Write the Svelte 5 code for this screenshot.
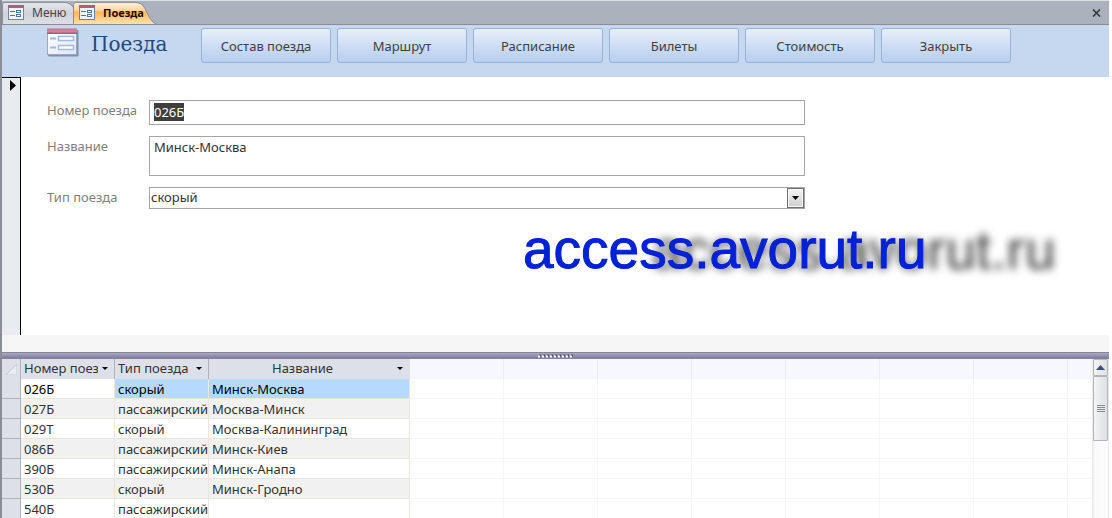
<script lang="ts">
  import { onMount } from 'svelte'

  const tabs = [
    { title: 'Меню', active: false },
    { title: 'Поезда', active: true }
  ]

  const actions = ['Состав поезда', 'Маршрут', 'Расписание', 'Билеты', 'Стоимость', 'Закрыть']

  const trains = [
    { number: '026Б', type: 'скорый', name: 'Минск-Москва' },
    { number: '027Б', type: 'пассажирский', name: 'Москва-Минск' },
    { number: '029Т', type: 'скорый', name: 'Москва-Калининград' },
    { number: '086Б', type: 'пассажирский', name: 'Минск-Киев' },
    { number: '390Б', type: 'пассажирский', name: 'Минск-Анапа' },
    { number: '530Б', type: 'скорый', name: 'Минск-Гродно' },
    { number: '540Б', type: 'пассажирский', name: '' }
  ]

  const columns = ['Номер поезда', 'Тип поезда', 'Название']
  const spare = Array.from({ length: 8 }, (_, i) => i)

  let current = $state(0)
  let number = $state(trains[0].number)
  let name = $state(trains[0].name)
  let type = $state(trains[0].type)
  let numberInput: HTMLInputElement

  function pick(i: number) {
    current = i
    number = trains[i].number
    name = trains[i].name
    type = trains[i].type
  }

  onMount(() => {
    numberInput.focus()
    numberInput.select()
  })
</script>

{#snippet formIcon(cls: string)}
  <svg class={cls} viewBox="0 0 32 29" aria-hidden="true">
    <defs>
      <linearGradient id="icon-head" x2="0" y2="1">
        <stop offset="0" stop-color="#c96a8a" />
        <stop offset="0.5" stop-color="#d58aa4" />
        <stop offset="1" stop-color="#b5486f" />
      </linearGradient>
      <linearGradient id="icon-body" x2="1" y2="1">
        <stop offset="0" stop-color="#fff" />
        <stop offset="1" stop-color="#dfe5f2" />
      </linearGradient>
    </defs>
    <rect x="1" y="2" width="30.500" height="26.500" rx="1" fill="#6f7f9f" opacity=".8" />
    <rect x="0.5" y="1.500" width="29" height="25" fill="url(#icon-body)" stroke="#9aa6c2" />
    <rect x="0" y="0.500" width="30" height="5.500" fill="url(#icon-head)" />
    <path d="M3 10.500h6M3 19.500h6" stroke="#a3b9dd" stroke-width="2" />
    <rect x="11.500" y="8.500" width="15" height="4" fill="#fff" stroke="#a3b9dd" stroke-width="1.500" />
    <rect x="11.500" y="17.500" width="15" height="4" fill="#fff" stroke="#a3b9dd" stroke-width="1.500" />
  </svg>
{/snippet}

{#snippet tabIcon()}
  <svg class="tab-icon" viewBox="0 0 16 15" aria-hidden="true">
    <rect x="0.5" y="0.5" width="15" height="14" fill="#f0f3fa" stroke="#6c82b4" />
    <rect x="0" y="0" width="16" height="3" fill="#b9587a" />
    <path d="M2 6.500h5M2 10.500h5" stroke="#5470ae" />
    <rect x="8.500" y="5.500" width="4" height="2" fill="#fff" stroke="#5470ae" />
    <rect x="8.500" y="9.500" width="4" height="2" fill="#fff" stroke="#5470ae" />
  </svg>
{/snippet}

<div class="window">
  <nav class="tabs">
    {#each tabs as tab (tab.title)}
      <button class="tab" class:active={tab.active}>
        <svg class="tab-shape" viewBox="0 0 83 24" preserveAspectRatio="none" aria-hidden="true">
          <defs>
            <linearGradient id="tab-on" x2="0" y2="1">
              <stop offset="0" stop-color="#fdeed9" />
              <stop offset="0.35" stop-color="#fdd9a6" />
              <stop offset="0.45" stop-color="#fdb65a" />
              <stop offset="1" stop-color="#fde3ad" />
            </linearGradient>
            <linearGradient id="tab-off" x2="0" y2="1">
              <stop offset="0" stop-color="#e6e8ec" />
              <stop offset="0.5" stop-color="#cfd3d9" />
              <stop offset="1" stop-color="#dcdfe4" />
            </linearGradient>
          </defs>
          <path
            d="M.5 24V4Q.5 1.500 3 1.500H62Q69 1.500 72 8L77 18Q80 23 83 24"
            fill="url(#{tab.active ? 'tab-on' : 'tab-off'})"
            stroke="#888d96"
          />
        </svg>
        {@render tabIcon()}
        <span>{tab.title}</span>
      </button>
    {/each}
    <button class="close" aria-label="Закрыть вкладку">
      <svg viewBox="0 0 9 8" aria-hidden="true">
        <path d="M1 .5l7 7M8 .5l-7 7" stroke="#33373d" stroke-width="1.6" />
      </svg>
    </button>
  </nav>

  <header class="form-header">
    {@render formIcon('form-icon')}
    <h1>Поезда</h1>
    <div class="actions">
      {#each actions as action (action)}
        <button class="action">{action}</button>
      {/each}
    </div>
  </header>

  <main class="form">
    <div class="record-selector">
      <svg viewBox="0 0 6 11" aria-hidden="true"><path d="M0 0l6 5.500L0 11z" /></svg>
    </div>
    <div class="detail">
      <div class="fields">
        <label for="number">Номер поезда</label>
        <input id="number" class="box" bind:this={numberInput} bind:value={number} />
        <label for="name">Название</label>
        <textarea id="name" class="box" bind:value={name}></textarea>
        <label for="type">Тип поезда</label>
        <div class="combo">
          <select id="type" bind:value={type}>
            <option>скорый</option>
            <option>пассажирский</option>
          </select>
          <span class="combo-arrow">
            <svg viewBox="0 0 7 4" aria-hidden="true"><path d="M0 0h7L3.500 4z" /></svg>
          </span>
        </div>
      </div>
      <p class="watermark">access.avorut.ru</p>
    </div>
  </main>
  <div class="form-footer"></div>

  <div class="splitter">
    <svg viewBox="0 0 36 4" aria-hidden="true">
      <path d="M1 1.500H36" stroke="#4d4b66" stroke-width="2" stroke-dasharray="2 2" />
      <path d="M0 2.500H35" stroke="#fff" stroke-width="2" stroke-dasharray="2 2" />
    </svg>
  </div>

  <section class="datasheet">
    <table>
      <colgroup>
        <col class="c-select" />
        <col class="c-std" />
        <col class="c-std" />
        <col class="c-name" />
        {#each spare as i (i)}
          <col class:c-std={i < 7} />
        {/each}
      </colgroup>
      <thead>
        <tr>
          <th class="corner">
            <svg viewBox="0 0 11 11" aria-hidden="true"><path d="M11 0v11H0z" fill="#e9edf3" stroke="#b4bece" stroke-width=".7" /></svg>
          </th>
          {#each columns as column, i (column)}
            <th class:centered={i === 2}>
              <div class="head">
                <span>{column}</span>
                <svg viewBox="0 0 6 3" aria-hidden="true"><path d="M0 0h6L3 3z" /></svg>
              </div>
            </th>
          {/each}
          {#each spare as i (i)}<th class="spare"></th>{/each}
        </tr>
      </thead>
      <tbody>
        {#each trains as train, i (train.number)}
          <tr class:current={i === current} onclick={() => pick(i)}>
            <td class="selector"></td>
            <td>{train.number}</td>
            <td>{train.type}</td>
            <td>{train.name}</td>
            {#each spare as s (s)}<td class="spare"></td>{/each}
          </tr>
        {/each}
      </tbody>
    </table>
    <div class="scrollbar">
      <button class="scroll-up" aria-label="Вверх">
        <svg viewBox="0 0 9 5" aria-hidden="true"><path d="M4.500 0L9 5H0z" fill="#3f4d73" /></svg>
      </button>
      <div class="thumb"><i></i><i></i><i></i><i></i></div>
    </div>
  </section>
</div>

<style>
  :global(body) {
    margin: 0;
    background: #fff;
  }
  .window {
    display: flex;
    flex-direction: column;
    box-sizing: border-box;
    height: 100vh;
    margin-right: 3px;
    overflow: hidden;
    border-left: 2px solid #8b8d96;
    font-family: 'Noto Sans', 'Open Sans', sans-serif;
    font-size: 13px;
    color: #333;
  }
  button,
  input,
  textarea,
  select {
    font: inherit;
    color: inherit;
  }

  .tabs {
    display: flex;
    flex: none;
    box-sizing: border-box;
    height: 25px;
    border-top: 1px solid #dde1e6;
    border-bottom: 1px solid #8b8d92;
    background: #abb2bd;
  }
  .tab {
    position: relative;
    display: flex;
    align-items: center;
    gap: 8px;
    width: 83px;
    margin-right: -12px;
    padding: 0 0 0 6px;
    border: 0;
    background: none;
    font-size: 12px;
    color: #444;
  }
  .tab.active {
    z-index: 1;
    font-weight: 700;
    font-size: 11px;
    color: #111;
  }
  .tab-shape {
    position: absolute;
    inset: 0;
    width: 100%;
    height: 100%;
  }
  .tab-icon,
  .tab span {
    position: relative;
    flex: none;
  }
  .tab-icon {
    width: 16px;
    height: 15px;
  }
  .close {
    margin-left: auto;
    padding: 0 8px;
    border: 0;
    background: none;
    line-height: 0;
  }
  .close svg {
    width: 9px;
    height: 8px;
  }

  .form-header {
    display: flex;
    flex: none;
    box-sizing: border-box;
    height: 52px;
    padding: 3px 0 0 45px;
    background: #c6d8f0;
  }
  .form-icon {
    flex: none;
    width: 32px;
    height: 29px;
  }
  h1 {
    flex: none;
    width: 110px;
    margin: 0 0 0 12px;
    font-family: 'DejaVu Serif', serif;
    font-size: 20px;
    font-weight: 400;
    line-height: 32px;
    color: #1f497d;
  }
  .actions {
    display: flex;
    gap: 6px;
  }
  .action {
    width: 130px;
    height: 35px;
    padding: 0;
    border: 1px solid #95b3db;
    border-radius: 3px;
    background: linear-gradient(#e6eefa, #b7ceef);
    color: #404040;
  }

  .form {
    display: flex;
    flex: none;
    background: #fff;
  }
  .record-selector {
    box-sizing: border-box;
    width: 19px;
    padding: 2px 0 0 8px;
    border-top: 1px solid #000;
    border-right: 1px solid #000;
    background: #e8ecf1;
    line-height: 0;
  }
  .record-selector svg {
    width: 6px;
    height: 11px;
  }
  .detail {
    flex: 1;
    padding: 23px 0 55px 26px;
  }
  .fields {
    display: grid;
    grid-template-columns: 102px 656px;
    row-gap: 11px;
  }
  label {
    line-height: 20px;
    color: #7f7f7f;
  }
  .box,
  .combo {
    box-sizing: border-box;
    width: 100%;
    border: 1px solid #a5a5a5;
    background: #fff;
  }
  .box {
    padding: 0 4px;
    border-radius: 0;
    outline: 0;
    line-height: 18px;
  }
  input.box {
    height: 25px;
    padding-bottom: 2px;
  }
  input::selection {
    background: #3f3f3f;
    color: #fff;
  }
  textarea.box {
    display: block;
    height: 40px;
    padding-top: 1px;
    resize: none;
  }
  .combo {
    display: flex;
    height: 22px;
  }
  select {
    flex: 1;
    padding: 0 1px 2px;
    border: 0;
    outline: 0;
    background: none;
    appearance: none;
  }
  .combo-arrow {
    display: grid;
    place-items: center;
    box-sizing: border-box;
    width: 17px;
    border: 1px solid #707070;
    background: linear-gradient(#f4f4f4, #cfcfcf);
    box-shadow: inset 0 0 0 1px #f8f8f8;
    pointer-events: none;
  }
  .combo-arrow svg {
    width: 7px;
    height: 4px;
  }
  .watermark {
    margin: 10px 0 0 476px;
    font-family: 'Liberation Sans', Arial, sans-serif;
    font-size: 55px;
    line-height: 61px;
    white-space: nowrap;
    color: #0021d6;
    -webkit-text-stroke: 1px #0021d6;
    text-shadow: 129px 1px 9px #333;
  }
  .form-footer {
    flex: none;
    height: 17px;
    background: #f6f6f6;
  }

  .splitter {
    display: flex;
    flex: none;
    align-items: center;
    justify-content: center;
    box-sizing: border-box;
    height: 7px;
    border-top: 1px solid #85858f;
    border-bottom: 1px solid #85858f;
    background: linear-gradient(#a9a9c6, #7e7ca3);
  }
  .splitter svg {
    width: 36px;
    height: 4px;
  }

  .datasheet {
    display: flex;
    flex: 1;
    align-items: stretch;
    min-height: 0;
  }
  table {
    flex: 1;
    align-self: flex-start;
    width: 0;
    table-layout: fixed;
    border-collapse: separate;
    border-spacing: 0;
  }
  .c-select {
    width: 19px;
  }
  .c-std {
    width: 94px;
  }
  .c-name {
    width: 201px;
  }
  th,
  td {
    box-sizing: border-box;
    height: 20px;
    overflow: hidden;
    font-weight: 400;
    text-align: left;
    white-space: nowrap;
  }
  th {
    padding: 0 6px 2px 3px;
    border-right: 1px solid #aeb4bd;
    background: #dde1e7;
    line-height: 18px;
  }
  th.corner {
    padding: 0 0 0 4px;
    line-height: 0;
  }
  .corner svg {
    width: 11px;
    height: 11px;
  }
  .head {
    display: flex;
    align-items: center;
    gap: 4px;
  }
  .head span {
    flex: 1;
    overflow: hidden;
  }
  .head svg {
    flex: none;
    width: 6px;
    height: 3px;
  }
  .centered {
    border-right-color: #e4e4dc;
    text-align: center;
  }
  th.spare {
    border-right-color: #ebebf0;
    background: #f7f7ff;
  }
  td {
    padding: 2px 0 0 3px;
    border-right: 1px solid #e9e7dc;
    border-bottom: 1px solid #e9e7dc;
    line-height: 17px;
  }
  tbody tr:nth-child(even) td {
    background: #f1f1f1;
  }
  tbody tr.current td:not(:nth-child(2)) {
    background: #b5d9ff;
  }
  .current td {
    color: #000;
  }
  tbody tr td.selector.selector:first-child {
    border-right-color: #aeb4bd;
    border-bottom-color: #aeb4bd;
    background: #dde1e7;
  }
  tbody tr td.spare.spare:not(:nth-child(2)) {
    border-color: #f6f6f6;
    background: #fff;
  }
  th.spare:last-child,
  td.spare:last-child {
    border-right: 0;
  }

  .scrollbar {
    flex: none;
    box-sizing: border-box;
    width: 17px;
    padding-left: 1px;
    border-right: 1px solid #e8e8e8;
    background: linear-gradient(90deg, #e8e8e8, #fafafa 3px, #fdfdfd);
  }
  .scroll-up,
  .thumb {
    display: flex;
    flex-direction: column;
    align-items: center;
    justify-content: center;
    gap: 1px;
    box-sizing: border-box;
    width: 15px;
    padding: 0;
    border: 1px solid #b2b5ba;
    border-radius: 1px;
    background: linear-gradient(90deg, #f4f4f5, #dfe0e2);
  }
  .scroll-up {
    height: 17px;
  }
  .scroll-up svg {
    width: 9px;
    height: 5px;
  }
  .thumb {
    height: 65px;
  }
  .thumb i {
    width: 8px;
    height: 1px;
    background: #8b8b8b;
  }
</style>
